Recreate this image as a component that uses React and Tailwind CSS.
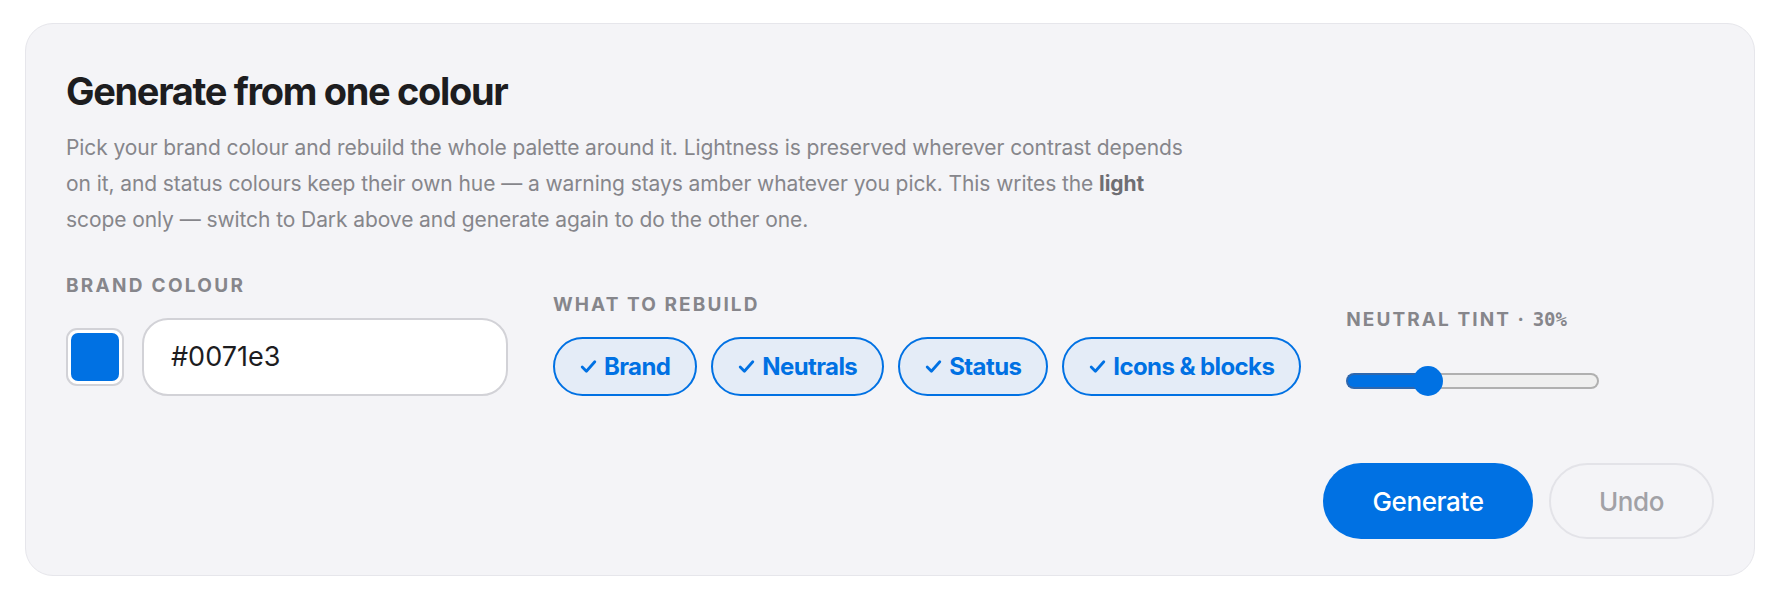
import React from "react";

function Check() {
  return (
    <svg width="17" height="15" viewBox="0 0 17 15" fill="none" className="shrink-0">
      <path d="M2.2 8 L6.4 12.2 L14.8 2.8" stroke="#0071e3" strokeWidth="2.8" strokeLinecap="round" strokeLinejoin="round" />
    </svg>
  );
}

function Chip({ label }) {
  return (
    <div className="flex h-[59px] items-center gap-[7px] rounded-full border-2 border-[#0071e3] bg-[#e4ecf7] px-[25px] text-[24px] font-bold tracking-[-0.025em] text-[#0071e3]">
      <Check />
      <span>{label}</span>
    </div>
  );
}

export default function App() {
  const font = { fontFamily: "Inter, 'Noto Sans', sans-serif" };
  return (
    <div className="bg-white px-[25px] pt-[23px] pb-[26px]" style={font}>
      <div className="rounded-[28px] border border-[#e6e6eb] bg-[#f4f4f7] px-[40px] pt-[45px] pb-[36px]">
        <h1 className="text-[38px] font-bold leading-[44px] tracking-[-0.035em] text-[#1d1d1f]">
          Generate from one colour
        </h1>
        <p className="mt-[17px] max-w-[1126px] text-[21px] leading-[36px] tracking-[-0.004em] text-[#86868b]">
          Pick your brand colour and rebuild the whole palette around it. Lightness is preserved wherever contrast depends on it, and status colours keep their own hue — a warning stays amber whatever you pick. This writes the{" "}
          <b className="font-bold text-[#6e6e73]">light</b> scope only — switch to Dark above and generate again to do the other one.
        </p>

        <div className="mt-[36px] flex items-end gap-[45px]">
          <div className="flex flex-col">
            <div className="mb-[20px] text-[19px] font-bold leading-[24px] tracking-[0.12em] text-[#86868b]">
              BRAND COLOUR
            </div>
            <div className="flex items-center gap-[18px]">
              <div className="h-[58px] w-[58px] rounded-[11px] border-2 border-[#d2d2d7] bg-white p-[3px]">
                <div className="h-full w-full rounded-[7px] bg-[#0071e3]" />
              </div>
              <div className="flex h-[78px] w-[366px] items-center rounded-[26px] border-2 border-[#d2d2d7] bg-white pl-[27px] text-[27px] text-[#1d1d1f]">
                #0071e3
              </div>
            </div>
          </div>

          <div className="flex flex-col">
            <div className="mb-[20px] text-[19px] font-bold leading-[24px] tracking-[0.11em] text-[#86868b]">
              WHAT TO REBUILD
            </div>
            <div className="flex gap-[14px]">
              <Chip label="Brand" />
              <Chip label="Neutrals" />
              <Chip label="Status" />
              <Chip label="Icons & blocks" />
            </div>
          </div>

          <div className="flex flex-col">
            <div className="mb-[34px] text-[19px] font-bold leading-[24px] tracking-[0.11em] text-[#86868b]">
              NEUTRAL TINT ·{" "}
              <span className="tracking-normal" style={{ fontFamily: "'DejaVu Sans Mono', monospace" }}>30%</span>
            </div>
            <div className="relative h-[30px] w-[253px]">
              <div className="absolute left-0 right-0 top-[7px] flex h-[16px]">
                <div className="h-full w-[88px] rounded-l-full border-2 border-r-0 border-[#2f67ad] bg-[#0071e3]" />
                <div className="h-full flex-1 rounded-r-full border-2 border-l-0 border-[#b0b0b0] bg-[#efefef]" />
              </div>
              <div className="absolute left-[67px] top-0 h-[30px] w-[30px] rounded-full bg-[#0071e3]" />
            </div>
          </div>
        </div>

        <div className="mt-[67px] flex justify-end gap-[16px]">
          <button className="h-[76px] w-[210px] rounded-full bg-[#0071e3] text-[26px] font-medium tracking-[-0.015em] text-white">
            Generate
          </button>
          <button className="h-[76px] w-[165px] rounded-full border-2 border-[#e3e3e8] text-[26px] font-medium tracking-[-0.015em] text-[#a1a1a6]">
            Undo
          </button>
        </div>
      </div>
    </div>
  );
}
